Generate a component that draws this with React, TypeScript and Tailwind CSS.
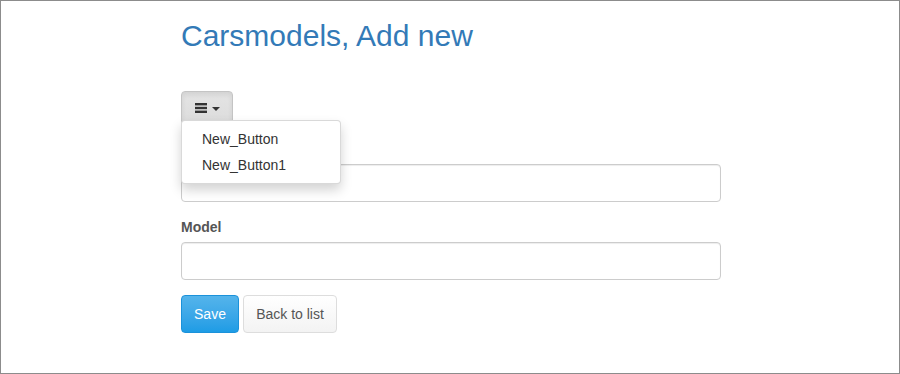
export default function App() {
  return (
    <div
      className="h-[374px] w-[900px] border border-[#8c8c8c] bg-white text-[14px] text-[#333]"
      style={{ fontFamily: '"Liberation Sans", Arial, sans-serif' }}
    >
      <div className="ml-[180px] w-[540px]">
        <h2 className="mt-[18px] text-[30px] leading-[34px] text-[#337ab7]">
          Carsmodels, Add new
        </h2>

        {/* Toolbar dropdown */}
        <div className="relative mt-[38px] mb-[14px] h-[34px]">
          <button className="flex h-[34px] w-[52px] items-center justify-center gap-[5px] rounded-[4px] border border-[#c4c4c4] bg-gradient-to-b from-[#e4e4e4] to-[#dcdcdc] shadow-[inset_0_3px_5px_rgba(0,0,0,0.08)]">
            <svg width="12" height="10" viewBox="0 0 12 10" fill="#333">
              <rect x="0" y="0" width="12" height="2.4" />
              <rect x="0" y="3.8" width="12" height="2.4" />
              <rect x="0" y="7.6" width="12" height="2.4" />
            </svg>
            <span className="mt-[1px] h-0 w-0 border-x-[4px] border-t-[4px] border-x-transparent border-t-[#333]" />
          </button>
          <ul className="absolute left-0 top-[29px] z-10 w-[160px] rounded-[4px] border border-[rgba(0,0,0,0.15)] bg-white py-[5px] shadow-[0_6px_12px_rgba(0,0,0,0.175)]">
            <li className="px-[20px] py-[3px] leading-[20px]">New_Button</li>
            <li className="px-[20px] py-[3px] leading-[20px]">New_Button1</li>
          </ul>
        </div>

        {/* first field: its label sits under the open menu */}
        <div className="mb-[15px]">
          <div className="mb-[5px] h-[20px]" />
          <input className="block h-[38px] w-full rounded-[4px] border border-[#ccc] px-[12px] shadow-[inset_0_1px_1px_rgba(0,0,0,0.075)] outline-none" />
        </div>

        <div className="mb-[15px]">
          <label className="mb-[5px] block font-bold leading-[20px] text-[#555]">Model</label>
          <input className="block h-[38px] w-full rounded-[4px] border border-[#ccc] px-[12px] shadow-[inset_0_1px_1px_rgba(0,0,0,0.075)] outline-none" />
        </div>

        <div className="flex gap-[4px]">
          <button className="h-[38px] w-[58px] rounded-[4px] border border-[#1b92da] bg-gradient-to-b from-[#54b4eb] to-[#1d9ce5] text-white">
            Save
          </button>
          <button className="h-[38px] w-[94px] rounded-[4px] border border-[#ddd] bg-gradient-to-b from-white to-[#f3f3f3] text-[#555]">
            Back to list
          </button>
        </div>
      </div>
    </div>
  );
}
